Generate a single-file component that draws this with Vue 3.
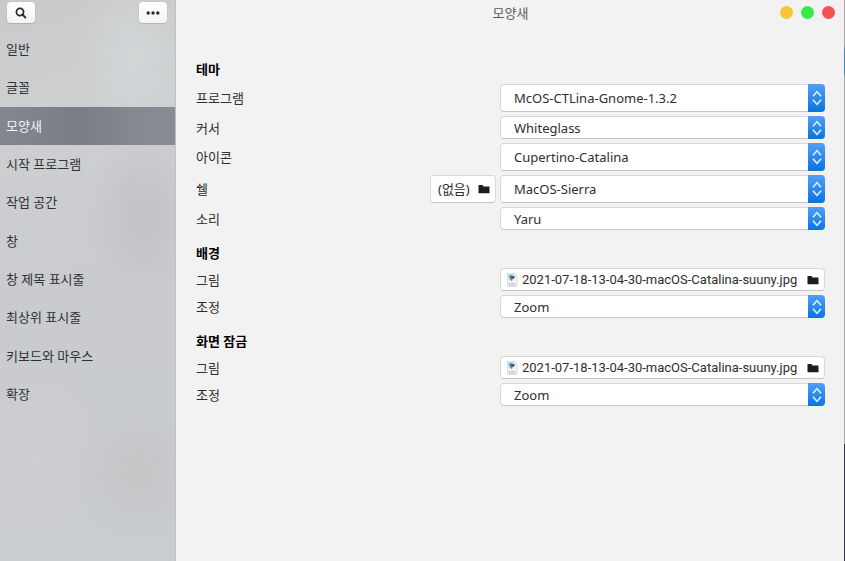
<script setup>
import { ref, reactive } from 'vue'

const pages = [
  '일반', '글꼴', '모양새', '시작 프로그램', '작업 공간',
  '창', '창 제목 표시줄', '최상위 표시줄', '키보드와 마우스', '확장',
]
const current = ref('모양새')

const wallpaper = '2021-07-18-13-04-30-macOS-Catalina-suuny.jpg'
const fits = ['Zoom', 'Centered', 'Scaled', 'Stretched', 'Wallpaper']

const sections = reactive([
  {
    title: '테마',
    rows: [
      { id: 'app', label: '프로그램', value: 'McOS-CTLina-Gnome-1.3.2', tall: true },
      { id: 'cursor', label: '커서', value: 'Whiteglass' },
      { id: 'icons', label: '아이콘', value: 'Cupertino-Catalina', tall: true },
      { id: 'shell', label: '쉘', value: 'MacOS-Sierra', tall: true, picker: '(없음)' },
      { id: 'sound', label: '소리', value: 'Yaru' },
    ],
  },
  {
    title: '배경',
    rows: [
      { id: 'bg-image', label: '그림', file: wallpaper },
      { id: 'bg-fit', label: '조정', value: 'Zoom', options: fits },
    ],
  },
  {
    title: '화면 잠금',
    rows: [
      { id: 'lock-image', label: '그림', file: wallpaper },
      { id: 'lock-fit', label: '조정', value: 'Zoom', options: fits },
    ],
  },
])
</script>

<template>
  <div class="window">
    <aside class="sidebar">
      <div class="tools">
        <button class="tool" type="button" aria-label="검색">
          <svg width="12" height="12" viewBox="0 0 12 12">
            <circle cx="5" cy="5" r="3.6" fill="none" stroke="#2b2b2b" stroke-width="1.7" />
            <path d="M7.6 7.6 10.4 10.6" stroke="#2b2b2b" stroke-width="2" stroke-linecap="round" />
          </svg>
        </button>
        <button class="tool" type="button" aria-label="메뉴">
          <svg width="14" height="4" viewBox="0 0 14 4" fill="#2b2b2b">
            <circle cx="2.2" cy="2" r="1.7" />
            <circle cx="7" cy="2" r="1.7" />
            <circle cx="11.8" cy="2" r="1.7" />
          </svg>
        </button>
      </div>
      <nav class="pages">
        <a
          v-for="page in pages"
          :key="page"
          href="#"
          class="page"
          :class="{ active: page === current }"
          @click.prevent="current = page"
        >{{ page }}</a>
      </nav>
    </aside>

    <main class="content">
      <header class="titlebar">
        <h1>{{ current }}</h1>
        <div class="controls">
          <button class="dot minimize" type="button" aria-label="최소화"></button>
          <button class="dot maximize" type="button" aria-label="최대화"></button>
          <button class="dot close" type="button" aria-label="닫기"></button>
        </div>
      </header>

      <div class="settings">
        <section v-for="section in sections" :key="section.title" class="group">
          <h2>{{ section.title }}</h2>
          <div v-for="row in section.rows" :key="row.id" class="row" :class="{ tall: row.tall }">
            <label class="label" :for="row.id">{{ row.label }}</label>

            <button v-if="row.picker" class="field picker" type="button">
              <span>{{ row.picker }}</span>
              <svg class="folder" width="12" height="10" viewBox="0 0 12 10">
                <path d="M.5 1h4l1 1.4h6V9.300H.5z" fill="#1d1d1d" />
              </svg>
            </button>

            <button v-if="row.file" :id="row.id" class="field file" type="button">
              <svg class="thumb" width="12" height="14" viewBox="0 0 12 14">
                <path d="M1.500.500h7l2.500 2.500v10.500H1.500z" fill="#f1f1ef" stroke="#d2d2d0" stroke-width=".7" />
                <path d="M1.800.900h6.500v4L5 8 1.800 6z" fill="#c4dfe8" />
                <path d="M3 3.200 5 2l2 1 2.200.4L8 5.600 6.500 6 6 8.200 4.400 6z" fill="#447a98" />
                <path d="M6 3.500 8.500 4 7 5.500z" fill="#23485f" />
                <path d="M3 10.500h1.500M5.300 10.500h1.500M7.600 10.500h1.600M3 12h6" stroke="#b5b5b5" stroke-width=".8" />
              </svg>
              <span class="name">{{ row.file }}</span>
              <svg class="folder" width="12" height="10" viewBox="0 0 12 10">
                <path d="M.5 1h4l1 1.4h6V9.300H.5z" fill="#1d1d1d" />
              </svg>
            </button>

            <div v-else class="combo">
              <select :id="row.id" v-model="row.value" class="field">
                <option v-for="option in row.options ?? [row.value]" :key="option">{{ option }}</option>
              </select>
              <span class="stepper">
                <svg width="10" height="18" viewBox="0 0 10 18" fill="none" stroke="#e4f1ff" stroke-width="1.600">
                  <path d="M1 7.200 5 2.600 9 7.200M1 10.800 5 15.400 9 10.800" />
                </svg>
              </span>
            </div>
          </div>
        </section>
      </div>
    </main>
  </div>
</template>

<style>
body {
  margin: 0;
  background: #f2f2f2;
}
</style>

<style scoped>
.window {
  display: flex;
  min-height: 100vh;
  box-sizing: border-box;
  font-family: "Noto Sans", "Noto Sans CJK KR", sans-serif;
  font-size: 13px;
  line-height: 20px;
  color: #2e2e2e;
}

.sidebar {
  flex: 0 0 175px;
  border-right: 1px solid #c0c1c4;
  background:
    radial-gradient(ellipse 60px 80px at 82% 38%, rgba(188, 188, 192, 0.6), rgba(188, 188, 192, 0) 100%),
    radial-gradient(ellipse 70px 70px at 80% 84%, rgba(194, 194, 194, 0.6), rgba(194, 194, 194, 0) 100%),
    radial-gradient(ellipse 60px 80px at 76% 10%, rgba(212, 216, 217, 0.8), rgba(212, 216, 217, 0) 100%),
    radial-gradient(ellipse 70px 90px at 20% 82%, rgba(207, 206, 210, 0.8), rgba(207, 206, 210, 0) 100%),
    linear-gradient(170deg, #c9cacc 0%, #cdcfd1 20%, #c9cbce 50%, #c9ccd0 100%);
}

.tools {
  display: flex;
  justify-content: space-between;
  height: 30px;
  padding: 2px 8px 0 7px;
  box-sizing: border-box;
}

.tool {
  display: flex;
  align-items: center;
  justify-content: center;
  width: 28px;
  height: 21px;
  padding: 0;
  border: 0;
  border-radius: 4px;
  background: linear-gradient(#ffffff, #f4f4f4);
  box-shadow: 0 0 1px rgba(0, 0, 0, 0.2), 0 1px 1px rgba(0, 0, 0, 0.12);
}

.pages {
  display: flex;
  flex-direction: column;
  height: 383px;
}

.page {
  flex: 1;
  display: flex;
  align-items: center;
  padding: 0 6px;
  color: #303136;
  text-decoration: none;
}

.page.active {
  background: linear-gradient(90deg, #858790, #7b7d86 45%, #868891 75%, #8a8c94);
  color: #f4f4f6;
}

.content {
  flex: 1;
  min-width: 0;
  border-right: 1px solid;
  border-image: linear-gradient(#a9a9a9 0 8%, #3f89ab 9% 13%, #a9a9a9 14% 79%, #34384a 79%) 1;
  background: #f2f2f2;
}

.titlebar {
  display: grid;
  grid-template-columns: 1fr auto 1fr;
  align-items: center;
  height: 25px;
  padding: 0 9px 0 10px;
}

h1 {
  grid-column: 2;
  margin: 0;
  font-size: 13px;
  font-weight: 400;
  color: #5c5c5c;
}

.controls {
  display: flex;
  justify-content: flex-end;
  gap: 8px;
}

.dot {
  width: 13px;
  height: 13px;
  padding: 0;
  border: 0;
  border-radius: 50%;
}

.minimize { background: #fbc337; }
.maximize { background: #38ea49; }
.close { background: #f55054; }

.settings {
  display: flex;
  flex-direction: column;
  gap: 12px;
  padding: 33px 19px 32px 20px;
}

.group {
  display: flex;
  flex-direction: column;
  gap: 4px;
}

h2 {
  margin: 0;
  font-size: 13px;
  line-height: 22px;
  font-weight: 700;
  color: #000;
}

.row {
  display: flex;
  align-items: stretch;
  gap: 4px;
  height: 23px;
}

.row.tall {
  height: 28px;
}

.label {
  flex: 1;
  display: flex;
  align-items: center;
}

.field {
  box-sizing: border-box;
  height: 100%;
  border: 1px solid #d8d8d8;
  border-bottom-color: #c6c6c6;
  border-radius: 4px;
  background: #fff;
  color: #2e2e2e;
  font: inherit;
}

.picker {
  display: flex;
  align-items: center;
  justify-content: space-between;
  width: 66px;
  padding: 0 5px 0 7px;
}

.file {
  display: flex;
  align-items: center;
  gap: 4px;
  width: 50%;
  min-width: 325px;
  padding: 0 5px;
  font-family: Roboto, "Noto Sans CJK KR", sans-serif;
}

.name {
  flex: 1;
  min-width: 0;
  overflow: hidden;
  text-align: left;
  text-overflow: ellipsis;
  white-space: nowrap;
}

.thumb,
.folder {
  flex: none;
}

.combo {
  display: grid;
  width: 50%;
  min-width: 325px;
}

.combo > * {
  grid-area: 1 / 1;
}

.combo .field {
  width: 100%;
  padding: 0 28px 0 13px;
  appearance: none;
}

.stepper {
  display: flex;
  align-items: center;
  justify-content: center;
  justify-self: end;
  width: 17px;
  border-radius: 0 4px 4px 0;
  background: linear-gradient(#4fa0fb, #0a74dd);
  pointer-events: none;
}
</style>
